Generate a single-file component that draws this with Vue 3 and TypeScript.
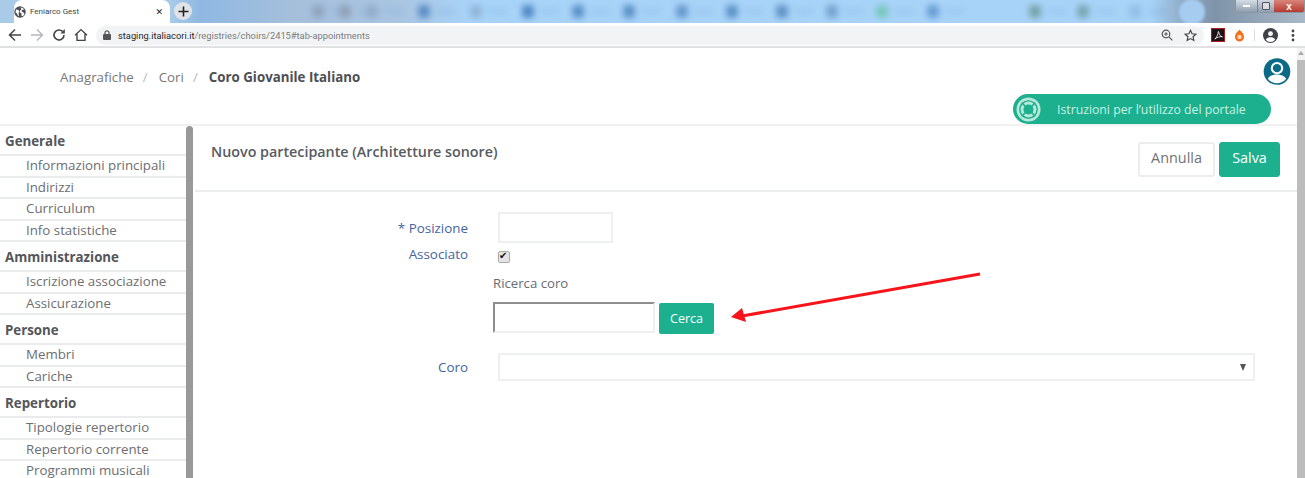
<script setup lang="ts">
interface Section { title: string; items: string[] }
const sections: Section[] = [
  { title: 'Generale', items: ['Informazioni principali', 'Indirizzi', 'Curriculum', 'Info statistiche'] },
  { title: 'Amministrazione', items: ['Iscrizione associazione', 'Assicurazione'] },
  { title: 'Persone', items: ['Membri', 'Cariche'] },
  { title: 'Repertorio', items: ['Tipologie repertorio', 'Repertorio corrente', 'Programmi musicali'] },
]
const blobs = [
  { w: 27, c: '#8d9fb8' }, { w: 27, c: '#8d9cb2' }, { w: 52, c: '#8fa9c8' }, { w: 52, c: '#4f83bd' },
  { w: 52, c: '#8fb0d4' }, { w: 50, c: '#3f7dbb' }, { w: 51, c: '#4d86c0' }, { w: 53, c: '#4f87c0' },
  { w: 50, c: '#5c8fc4' }, { w: 50, c: '#4f87c0' }, { w: 50, c: '#5488bd' }, { w: 50, c: '#6d9cc9' },
  { w: 51, c: '#6fc6b4' }, { w: 102, c: '#5d93cf' }, { w: 48, c: '#6e9a9a' }, { w: 52, c: '#6f9fa8' }, { w: 50, c: '#90bbe3' },
]
</script>

<template>
  <div class="window">
    <header class="chrome">
      <div class="tabstrip">
        <div class="tab">
          <svg class="globe" width="12" height="12" viewBox="0 0 24 24"><circle cx="12" cy="12" r="11.500" fill="#4a4d52"/><path d="M4 7l5 1 2 4-2 2 1 5-2 1-2-5-3-2zM13 3l5 1 2 3-4 1-1 3 3 1 3 4-3 4-3 0 0-5-3-2 0-4 3-2z" fill="#fff"/></svg>
          <span class="tab-title">Feniarco Gest</span>
          <span class="tab-close">✕</span>
        </div>
        <div class="newtab">
          <svg width="11" height="11" viewBox="0 0 11 11"><path d="M5.500 0.500v10M0.500 5.500h10" stroke="#222" stroke-width="1.600"/></svg>
        </div>
        <div class="blobs">
          <div v-for="(b, i) in blobs" :key="i" class="blob-cell" :style="{ width: b.w + 'px' }">
            <i class="blob" :style="{ background: b.c }"></i>
            <i class="blob-line"></i>
          </div>
        </div>
        <div class="corner-circle"></div>
        <div class="winbtns">
          <span class="wb wb-min"><i></i></span>
          <span class="wb wb-max"><i></i></span>
          <span class="wb wb-close">x</span>
        </div>
      </div>
      <div class="toolbar">
        <svg class="tool" width="14" height="14" viewBox="0 0 14 14"><path d="M13 7H2M7 1.500L1.500 7 7 12.500" fill="none" stroke="#444" stroke-width="1.500"/></svg>
        <svg class="tool" width="14" height="14" viewBox="0 0 14 14"><path d="M1 7h11M7 1.500L12.500 7 7 12.500" fill="none" stroke="#b5b7ba" stroke-width="1.400"/></svg>
        <svg class="tool" width="14" height="14" viewBox="0 0 14 14"><path d="M12 7a5 5 0 1 1-1.500-3.600" fill="none" stroke="#444" stroke-width="1.600"/><path d="M12.800 1v4.400H8.400z" fill="#444"/></svg>
        <svg class="tool" width="14" height="14" viewBox="0 0 14 14"><path d="M1 7.200L7 1.600l6 5.600M3 6v6.400h8V6" fill="none" stroke="#444" stroke-width="1.400"/></svg>
        <div class="omnibox">
          <svg width="8" height="10" viewBox="0 0 8 10"><rect y="4" width="8" height="6" rx="1" fill="#555"/><path d="M2 4.500V2.800a2 2 0 0 1 4 0v1.700" fill="none" stroke="#555" stroke-width="1.200"/></svg>
          <span class="url"><b>staging.italiacori.it</b>/registries/choirs/2415#tab-appointments</span>
          <svg class="omni-zoom" width="12" height="12" viewBox="0 0 12 12"><circle cx="5" cy="5" r="3.800" fill="none" stroke="#555" stroke-width="1.200"/><path d="M8 8l3.400 3.400M3.200 5h3.600M5 3.200v3.600" stroke="#555" stroke-width="1.100"/></svg>
          <svg class="omni-star" width="13" height="13" viewBox="0 0 24 24"><path d="M12 2.500l2.900 6.300 6.900.8-5.100 4.700 1.400 6.800-6.100-3.400-6.100 3.400 1.400-6.800-5.100-4.700 6.900-.8z" fill="none" stroke="#444" stroke-width="2.200"/></svg>
        </div>
        <div class="ext-pdf">
          <svg width="9" height="9" viewBox="0 0 10 10"><path d="M1 9C3 7 5 3 4.600 1 4.400 0.400 5.400 0.400 5.400 1.400 5.400 4 7 6 9.400 6.400 7 6 3.600 6.600 1 9z" fill="none" stroke="#fff" stroke-width="0.900"/></svg>
        </div>
        <svg class="ext-fire" width="11" height="13" viewBox="0 0 10 13"><path d="M5 0.500C5.500 2 9.500 3.500 9.500 8a4.500 4.500 0 0 1-9 0C.5 3.500 4.500 2 5 0.500z" fill="#f5701c"/><circle cx="5" cy="8" r="2.200" fill="#fbd6b0"/></svg>
        <i class="tool-sep"></i>
        <svg class="tool-avatar" width="15" height="15" viewBox="0 0 16 16"><circle cx="8" cy="8" r="8" fill="#3f4246"/><circle cx="8" cy="6" r="2.600" fill="#fff"/><path d="M3 12.400C4 10.400 6 9.800 8 9.800s4 .6 5 2.600A6.300 6.300 0 0 1 3 12.400z" fill="#fff"/></svg>
        <svg class="tool-dots" width="4" height="13" viewBox="0 0 4 13"><circle cx="2" cy="2" r="1.400" fill="#444"/><circle cx="2" cy="6.500" r="1.400" fill="#444"/><circle cx="2" cy="11" r="1.400" fill="#444"/></svg>
      </div>
    </header>

    <div class="viewport">
      <div class="page">
        <div class="topbar">
          <nav class="crumbs">
            <span>Anagrafiche</span><i>/</i><span>Cori</span><i>/</i><b>Coro Giovanile Italiano</b>
          </nav>
          <div class="top-right">
            <svg class="user" width="28" height="28" viewBox="0 0 28 28">
              <circle cx="14" cy="14" r="13.800" fill="#0b6b87"/>
              <circle cx="14" cy="10.500" r="6.400" fill="#fff"/>
              <circle cx="14" cy="10.500" r="4.300" fill="#0b6b87"/>
              <path d="M4.500 21.500c2-3.300 5.500-4.300 9.500-4.300s7.500 1 9.500 4.300a12 12 0 0 1-19 0z" fill="#fff"/>
            </svg>
            <div class="pill">
              <svg class="buoy" width="25" height="25" viewBox="0 0 26 26">
                <circle cx="13" cy="13" r="12.500" fill="#b9e8da"/>
                <circle cx="13" cy="13" r="9" fill="none" stroke="#1cb08e" stroke-width="1.500"/>
                <circle cx="13" cy="13" r="5.200" fill="#1cb08e"/>
                <path d="M6 6l4 4M20 6l-4 4M6 20l4-4M20 20l-4-4" stroke="#1cb08e" stroke-width="1.500"/>
              </svg>
              <span>Istruzioni per l’utilizzo del portale</span>
            </div>
          </div>
        </div>

        <div class="body">
          <aside class="sidebar">
            <div class="menu">
              <section v-for="s in sections" :key="s.title">
                <h3>{{ s.title }}</h3>
                <a v-for="it in s.items" :key="it">{{ it }}</a>
              </section>
            </div>
            <div class="side-scroll"></div>
          </aside>

          <main class="content">
            <div class="content-head">
              <h2>Nuovo partecipante (Architetture sonore)</h2>
              <div class="actions">
                <button class="btn btn-light">Annulla</button>
                <button class="btn btn-green">Salva</button>
              </div>
            </div>

            <form class="form" @submit.prevent>
              <div class="row row-pos">
                <label>* Posizione</label>
                <input class="inp inp-small" type="text" />
              </div>
              <div class="row row-assoc">
                <label>Associato</label>
                <input class="check" type="checkbox" checked />
              </div>
              <div class="search">
                <div class="search-title">Ricerca coro</div>
                <div class="search-line">
                  <input class="inp-search" type="text" />
                  <button class="btn-cerca">Cerca</button>
                </div>
              </div>
              <div class="row row-coro">
                <label>Coro</label>
                <div class="select"><span class="caret"></span></div>
              </div>
            </form>
          </main>
        </div>
      </div>

      <div class="scrollbar">
        <span class="sb-arrow"></span>
        <div class="sb-thumb"></div>
      </div>

      <svg class="arrow" width="260" height="54" viewBox="0 0 260 54">
        <path d="M250 2L12 44" stroke="#f7141b" stroke-width="3" fill="none"/>
        <path d="M1 45L12 36 16 50z" fill="#f7141b"/>
      </svg>
    </div>
  </div>
</template>

<style>
html, body { margin: 0; padding: 0; background: #fff; overflow: hidden; }
</style>

<style scoped>
.window { width: 1305px; height: 478px; overflow: hidden; position: relative; font-family: "Open Sans", "Liberation Sans", sans-serif; color: #666; background: #fff; }

/* browser chrome */
.chrome { height: 48px; display: flex; flex-direction: column; box-sizing: border-box; border-bottom: 2px solid #dfe1e3; }
.tabstrip { height: 23px; display: flex; position: relative; overflow: hidden; padding-left: 14px; box-sizing: border-box;
  background: linear-gradient(90deg, #a9cbe8 0, #a9cbe8 170px, #8fb8e2 200px, #a5bfdb 290px, #a9c5e2 400px, #a8d3f8 470px, #a8d3f8 1150px, #8ea9c4 1185px, #7f93a8 1215px, #aab9c8 1305px); }
.tab { width: 156px; height: 23px; background: #fff; border-radius: 8px 8px 0 0; display: flex; align-items: center; box-sizing: border-box; flex: none; }
.globe { margin-right: 4px; }
.tab-title { font: 8px "Roboto", sans-serif; color: #444; flex: 1; }
.tab-close { font: 9px "DejaVu Sans", sans-serif; color: #222; margin-right: 7px; }
.newtab { width: 18px; height: 18px; margin: 2px 0 0 4px; flex: none; border-radius: 50%; background: #dfe3e8; display: flex; align-items: center; justify-content: center; }
.blobs { display: flex; align-items: center; margin-left: 126px; filter: blur(3px); height: 23px; opacity: .85; }
.blob-cell { display: flex; align-items: center; gap: 6px; flex: none; }
.blob { width: 12px; height: 13px; border-radius: 4px; flex: none; margin-left: -6px; }
.blob-line { width: 20px; height: 5px; background: rgba(100,150,200,.22); flex: none; }
.corner-circle { position: absolute; left: 1179px; top: -1px; width: 26px; height: 26px; border-radius: 50%; background: #a6cdf0; filter: blur(1.500px); }
.winbtns { position: absolute; right: 0; top: 0; width: 70px; height: 13px; display: flex; border: 1px solid #8a96a3; border-top: 0; border-radius: 0 0 3px 3px; box-sizing: border-box; overflow: hidden; }
.wb { display: flex; align-items: center; justify-content: center; height: 12px; }
.wb-min { width: 21px; background: linear-gradient(#d5dde6, #8f9fb0); }
.wb-min i { width: 7px; height: 2px; background: #fff; }
.wb-max { width: 16px; background: linear-gradient(#cfd7e0, #8f9fb0); border-left: 1px solid #77838f; }
.wb-max i { width: 6px; height: 6px; border: 1.500px solid #556; background: #ddd; border-radius: 1px; }
.wb-close { flex: 1; background: linear-gradient(#d9857a, #b63a30); color: #fff; font: bold 10px/11px "Liberation Sans", sans-serif; }

.toolbar { height: 23px; background: #fff; display: flex; align-items: center; padding: 1px 0 0 8px; box-sizing: border-box; position: relative; }
.tool { margin-right: 8px; flex: none; }
.omnibox { width: 1108px; height: 19px; background: #f1f3f4; border-radius: 10px; display: flex; align-items: center; padding-left: 7px; box-sizing: border-box; flex: none; }
.url { font: 9.300px "Roboto", sans-serif; color: #7a7d80; margin-left: 7px; flex: 1; white-space: nowrap; }
.url b { font-weight: 400; color: #26282b; }
.omni-zoom { margin-right: 11px; }
.omni-star { margin-right: 7px; }
.ext-pdf { width: 12px; height: 12px; background: #1b1315; border: 1px solid #b11a1a; margin-left: 7px; display: flex; align-items: center; justify-content: center; flex: none; }
.ext-fire { margin-left: 9px; flex: none; }
.tool-sep { width: 1px; height: 12px; background: #dcdee0; margin-left: 9px; flex: none; }
.tool-avatar { margin-left: 8px; flex: none; }
.tool-dots { margin-left: 13px; flex: none; }

/* page */
.viewport { display: flex; height: 430px; position: relative; }
.page { width: 1297px; flex: none; display: flex; flex-direction: column; }
.topbar { height: 78px; flex: none; display: flex; justify-content: space-between; box-sizing: border-box; border-bottom: 2px solid #f0f1f1; }
.crumbs { padding: 19px 0 0 60px; font-size: 13.300px; line-height: 20px; color: #777; display: flex; }
.crumbs i { font-style: normal; color: #bbb; margin: 0 11px 0 9px; }
.crumbs b { color: #4d4f53; font-weight: 700; }
.top-right { display: flex; flex-direction: column; align-items: flex-end; padding: 10px 6px 0 0; position: relative; }
.user { display: block; }
.pill { width: 258px; height: 30px; margin: 9px 20px 0 0; border-radius: 15px; background: #1cb08e; display: flex; align-items: center; color: #c9f0e4; font-size: 12.250px; box-sizing: border-box; padding-left: 3px; flex: none; }
.pill span { margin-left: 16px; white-space: nowrap; }
.buoy { flex: none; }

.body { flex: 1; display: flex; min-height: 0; }
.sidebar { width: 195px; flex: none; display: flex; overflow: hidden; }
.menu { width: 186px; flex: none; }
.menu h3 { margin: 0; height: 30px; box-sizing: border-box; padding-left: 5px; font-size: 13.300px; line-height: 30px; font-weight: 700; color: #53565a; border-bottom: 2px solid #e9ebed; }
.menu a { display: block; height: 21.500px; box-sizing: border-box; padding-left: 26px; font-size: 13.300px; line-height: 19.500px; color: #6c6e72; border-bottom: 2px solid #e9ebed; white-space: nowrap; }
.side-scroll { width: 7px; flex: none; background: #999; border-radius: 4px 4px 0 0; }

.content { flex: 1; min-width: 0; }
.content-head { height: 66px; box-sizing: border-box; display: flex; justify-content: space-between; padding: 16px 17px 0 16px; border-bottom: 2px solid #eceeee; }
.content-head h2 { margin: 0; font-size: 14.300px; line-height: 20px; font-weight: 600; color: #585b5f; }
.actions { display: flex; gap: 4px; height: 35px; }
.btn { font-family: inherit; font-size: 14.400px; border-radius: 3px; cursor: pointer; height: 35px; padding: 0 0 4px; }
.btn-light { width: 77px; background: #fff; border: 2px solid #eceeee; color: #707275; }
.btn-green { width: 61px; background: #1cb08e; border: 1px solid #1cb08e; color: #fff; }

.form { padding-top: 20px; }
.row { display: grid; grid-template-columns: 273px 1fr; column-gap: 30px; align-items: center; }
.row label { text-align: right; font-size: 13.400px; color: #45649f; line-height: 20px; }
.row-pos { height: 31px; }
.inp-small { width: 115px; height: 31px; box-sizing: border-box; border: 2px solid #eeeff0; background: #fff; padding: 0; }
.row-assoc { margin-top: 1px; height: 22px; align-items: start; }
.check { appearance: none; width: 12px; height: 12px; margin: 7px 0 0; box-sizing: border-box; background: #e4e4e4; border: 1px solid #ababab; border-radius: 2px; position: relative; }
.check::after { content: "✔"; position: absolute; left: 0; top: -2px; font: 10px/12px "DejaVu Sans", sans-serif; color: #111; }
.search { padding: 7px 0 0 298px; }
.search-title { font-size: 13.200px; line-height: 20px; color: #6a6c70; }
.search-line { display: flex; gap: 4px; margin-top: 9px; }
.inp-search { width: 162px; height: 31px; box-sizing: border-box; padding: 0; background: #fff; border: 2px solid #eeeff0; border-top-color: #8e8e8e; border-left-color: #8e8e8e; }
.btn-cerca { width: 55px; height: 31px; margin-top: 1px; padding: 0; border: 0; border-radius: 2px; background: #1cb08e; color: #fff; font: 500 12.500px "Open Sans", sans-serif; }
.row-coro { margin-top: 19px; height: 28px; }
.select { width: 757px; height: 28px; box-sizing: border-box; border: 2px solid #eeeff0; position: relative; }
.caret { position: absolute; right: 7px; top: 9px; border-left: 3.500px solid transparent; border-right: 3.500px solid transparent; border-top: 7px solid #555; }

.scrollbar { width: 8px; flex: none; display: flex; flex-direction: column; align-items: center; background: #f3f3f3; }
.sb-arrow { margin-top: 3px; border-left: 3px solid transparent; border-right: 3px solid transparent; border-bottom: 4px solid #aaa; }
.sb-thumb { width: 8px; flex: 1; margin-top: 5px; background: #bcbcbc; }

.arrow { position: absolute; left: 730px; top: 224px; pointer-events: none; }
</style>
